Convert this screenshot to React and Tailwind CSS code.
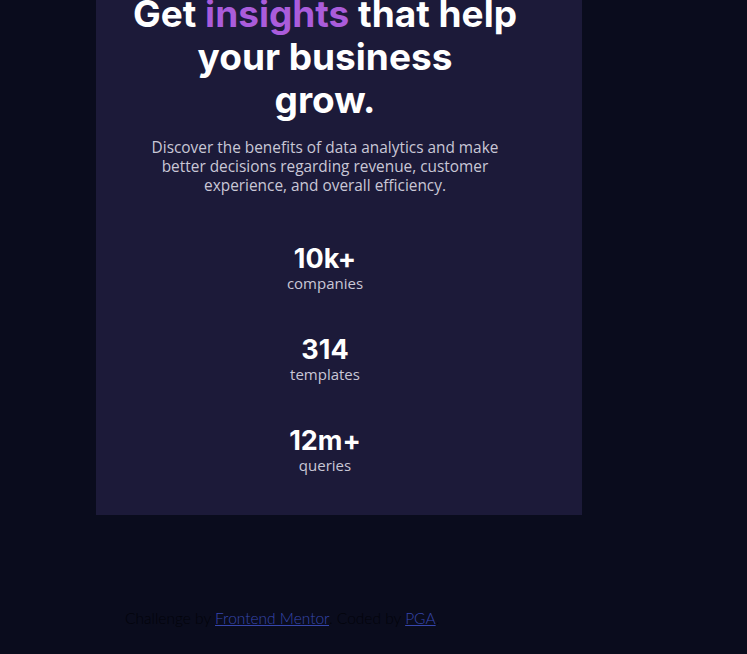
export default function App() {
  const stats = [
    { value: "10k+", label: "companies" },
    { value: "314", label: "templates" },
    { value: "12m+", label: "queries" },
  ];

  return (
    <div className="min-h-[654px] bg-[#0a0c1d] overflow-hidden">
      <main className="ml-[96px] w-[486px] bg-[#1c1a39] pb-[40px]">
        <div className="w-[458px] -mt-[8px] flex flex-col items-center text-center">
          <h1 className="font-['Inter',sans-serif] font-bold text-white text-[37px] leading-[43px]">
            Get <span className="text-[#aa5cdb]">insights</span> that help
            <br />
            your business
            <br />
            grow.
          </h1>
          <p className="mt-[17px] w-[356px] font-['Open_Sans',sans-serif] font-medium text-[15.4px] leading-[19px] text-[#c9c7d6]">
            Discover the benefits of data analytics and make better decisions regarding revenue, customer experience, and overall efficiency.
          </p>
          <div className="mt-[49px] flex flex-col gap-[42px]">
            {stats.map((s) => (
              <div key={s.label} className="flex flex-col items-center">
                <span className="font-['Inter',sans-serif] font-bold text-white text-[27px] leading-[30px]">
                  {s.value}
                </span>
                <span className="font-['Open_Sans',sans-serif] font-medium text-[15px] leading-[19px] text-[#c9c7d6]">
                  {s.label}
                </span>
              </div>
            ))}
          </div>
        </div>
      </main>
      <footer className="mt-[91px] pl-[125px] font-['Lato',sans-serif] font-light text-[15.5px] leading-[24px] text-[#02030a]">
        Challenge by{" "}
        <a href="#" className="text-[#3747ad] underline">
          Frontend Mentor
        </a>
        . Coded by{" "}
        <a href="#" className="text-[#3747ad] underline">
          PGA
        </a>
        .
      </footer>
    </div>
  );
}
